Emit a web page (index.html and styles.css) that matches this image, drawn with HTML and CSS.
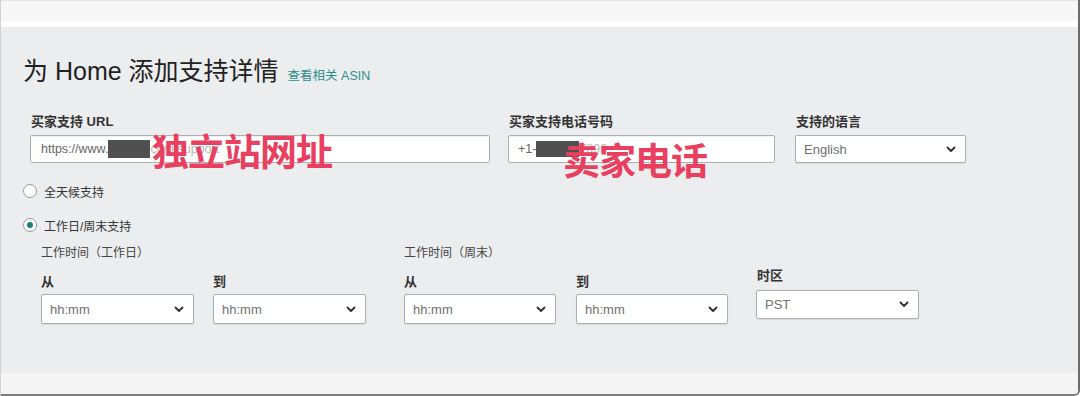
FILE: index.html
```html
<!DOCTYPE html>
<html lang="zh-CN">

<head>
    <meta charset="UTF-8">
    <title>添加支持详情</title>
    <link rel="stylesheet" href="styles.css">
</head>

<body>
    <div class="frame">
        <div class="topbar"></div>
        <div class="topbar-gap"></div>

        <div class="panel">
            <div class="title-row">
                <h1>为 Home 添加支持详情</h1>
                <a href="#" class="asin-link">查看相关 ASIN</a>
            </div>

            <div class="contact-row">
                <div class="field field-url">
                    <label>买家支持 URL</label>
                    <div class="input">
                        <span>https://www.</span><span class="redact redact-url"></span><span class="faded">com/support</span>
                    </div>
                    <div class="note note-url">独立站网址</div>
                </div>
                <div class="field field-phone">
                    <label>买家支持电话号码</label>
                    <div class="input">
                        <span>+1-</span><span class="redact redact-phone"></span><span class="faded">7890</span>
                    </div>
                    <div class="note note-phone">卖家电话</div>
                </div>
                <div class="field field-lang">
                    <label>支持的语言</label>
                    <div class="select">
                        <span class="value">English</span>
                        <svg class="chevron" width="10" height="7" viewBox="0 0 10 7"><polyline points="1.5,1.5 5,5 8.5,1.5" /></svg>
                    </div>
                </div>
            </div>

            <div class="radio-list">
                <div class="radio-item">
                    <span class="radio"></span>
                    <span>全天候支持</span>
                </div>
                <div class="radio-item">
                    <span class="radio checked"></span>
                    <span>工作日/周末支持</span>
                </div>
            </div>

            <div class="hours-row">
                <div class="hours-group">
                    <div class="group-title">工作时间（工作日）</div>
                    <div class="group-fields">
                        <div class="time-field">
                            <label>从</label>
                            <div class="select">
                                <span class="value">hh:mm</span>
                                <svg class="chevron" width="10" height="7" viewBox="0 0 10 7"><polyline points="1.5,1.5 5,5 8.5,1.5" /></svg>
                            </div>
                        </div>
                        <div class="time-field">
                            <label>到</label>
                            <div class="select">
                                <span class="value">hh:mm</span>
                                <svg class="chevron" width="10" height="7" viewBox="0 0 10 7"><polyline points="1.5,1.5 5,5 8.5,1.5" /></svg>
                            </div>
                        </div>
                    </div>
                </div>

                <div class="hours-group weekend">
                    <div class="group-title">工作时间（周末）</div>
                    <div class="group-fields">
                        <div class="time-field narrow">
                            <label>从</label>
                            <div class="select">
                                <span class="value">hh:mm</span>
                                <svg class="chevron" width="10" height="7" viewBox="0 0 10 7"><polyline points="1.5,1.5 5,5 8.5,1.5" /></svg>
                            </div>
                        </div>
                        <div class="time-field narrow">
                            <label>到</label>
                            <div class="select">
                                <span class="value">hh:mm</span>
                                <svg class="chevron" width="10" height="7" viewBox="0 0 10 7"><polyline points="1.5,1.5 5,5 8.5,1.5" /></svg>
                            </div>
                        </div>
                    </div>
                </div>

                <div class="tz-field">
                    <label>时区</label>
                    <div class="select tz-select">
                        <span class="value">PST</span>
                        <svg class="chevron" width="10" height="7" viewBox="0 0 10 7"><polyline points="1.5,1.5 5,5 8.5,1.5" /></svg>
                    </div>
                </div>
            </div>
        </div>

        <div class="footer"></div>
    </div>
</body>

</html>
```

FILE: styles.css
```css
body {
    margin: 0;
    padding: 0;
    font-family: "Liberation Sans", "Noto Sans CJK SC", sans-serif;
    color: #333;
    background-color: #fff;
    overflow: hidden;
}

.frame {
    width: 1080px;
    height: 396px;
    box-sizing: border-box;
    display: flex;
    flex-direction: column;
    border-left: 1px solid #d2d2d2;
    border-right: 2px solid #6c6c6c;
    border-bottom: 2px solid #7c7c7c;
    border-bottom-right-radius: 6px;
    overflow: hidden;
}

.topbar {
    height: 20px;
    background-color: #f7f7f7;
    border-top: 1px solid #e4e4e4;
}

.topbar-gap {
    height: 6px;
    background-color: #fff;
}

.panel {
    flex: 1;
    background-color: #ecedef;
    padding: 29px 0 0 22px;
}

.footer {
    height: 21px;
    background-color: #f5f5f5;
}

/* titulo */

.title-row {
    display: flex;
    align-items: baseline;
}

.title-row h1 {
    margin: 0;
    font-size: 25px;
    line-height: 30px;
    font-weight: normal;
    color: #222;
}

.asin-link {
    margin-left: 9px;
    font-size: 12.5px;
    color: #2f8d8b;
    text-decoration: none;
}

/* contato */

.contact-row {
    display: flex;
    margin-top: 28px;
    padding-left: 7px;
}

.field {
    position: relative;
}

.field label,
.tz-field label {
    display: block;
    font-size: 13px;
    line-height: 16px;
    font-weight: bold;
    color: #333;
    margin-bottom: 5px;
    padding-left: 1px;
}

.field-url {
    width: 460px;
}

.field-phone {
    width: 267px;
    margin-left: 18px;
}

.field-lang {
    width: 171px;
    margin-left: 20px;
}

.input {
    height: 28px;
    box-sizing: border-box;
    display: flex;
    align-items: center;
    padding-left: 10px;
    background-color: #fff;
    border: 1px solid #a9afb4;
    border-radius: 2px;
    box-shadow: inset 0 1px 0 rgba(0, 0, 0, 0.06);
    font-size: 12.5px;
    color: #666;
    white-space: nowrap;
    overflow: hidden;
}

.field-phone .input {
    padding-left: 9px;
}

.redact {
    display: inline-block;
    height: 18px;
    background-color: #505050;
}

.redact-url {
    width: 42px;
}

.redact-phone {
    width: 43px;
    height: 16px;
}

.faded {
    color: #b8b8b8;
}

.note {
    position: absolute;
    font-size: 37px;
    line-height: 1;
    font-weight: bold;
    color: #e8405e;
    letter-spacing: -1px;
    white-space: nowrap;
}

.note-url {
    left: 122px;
    top: 21px;
}

.note-phone {
    left: 55px;
    top: 30px;
}

/* select */

.select {
    height: 30px;
    box-sizing: border-box;
    display: flex;
    align-items: center;
    justify-content: space-between;
    padding: 0 9px 0 8px;
    background-color: #fff;
    border: 1px solid #a9afb4;
    border-radius: 2px;
    box-shadow: 0 1px 1px rgba(0, 0, 0, 0.08);
    font-size: 13px;
    color: #6f6f6f;
}

.field-lang .select {
    margin-top: 3px;
    height: 28px;
}

.chevron {
    fill: none;
    stroke: #333;
    stroke-width: 1.9;
    stroke-linecap: round;
    stroke-linejoin: round;
}

/* radio */

.radio-list {
    margin-top: 18px;
}

.radio-item {
    display: flex;
    align-items: center;
    height: 20px;
    font-size: 12px;
    color: #333;
    margin-bottom: 14px;
}

.radio {
    width: 14px;
    height: 14px;
    box-sizing: border-box;
    border: 1px solid #9a9a9a;
    border-radius: 50%;
    background-color: #fff;
    margin-right: 7px;
    display: flex;
    align-items: center;
    justify-content: center;
}

.radio.checked::after {
    content: "";
    width: 6px;
    height: 6px;
    border-radius: 50%;
    background-color: #1e7d77;
}

/* horarios */

.hours-row {
    display: flex;
    margin-top: -4px;
    padding-left: 18px;
}

.group-title {
    font-size: 12px;
    line-height: 16px;
    color: #444;
}

.group-fields {
    display: flex;
    gap: 19px;
    margin-top: 13px;
}

.hours-group.weekend {
    margin-left: 38px;
}

.weekend .group-fields {
    gap: 20px;
}

.time-field {
    width: 153px;
}

.time-field.narrow {
    width: 152px;
}

.time-field label {
    display: block;
    font-size: 13px;
    line-height: 16px;
    font-weight: bold;
    color: #333;
    margin-bottom: 4px;
}

.tz-field {
    width: 163px;
    margin-left: 28px;
    padding-top: 23px;
}

.tz-field label {
    margin-bottom: 6px;
}

.tz-select {
    height: 29px;
}
```
